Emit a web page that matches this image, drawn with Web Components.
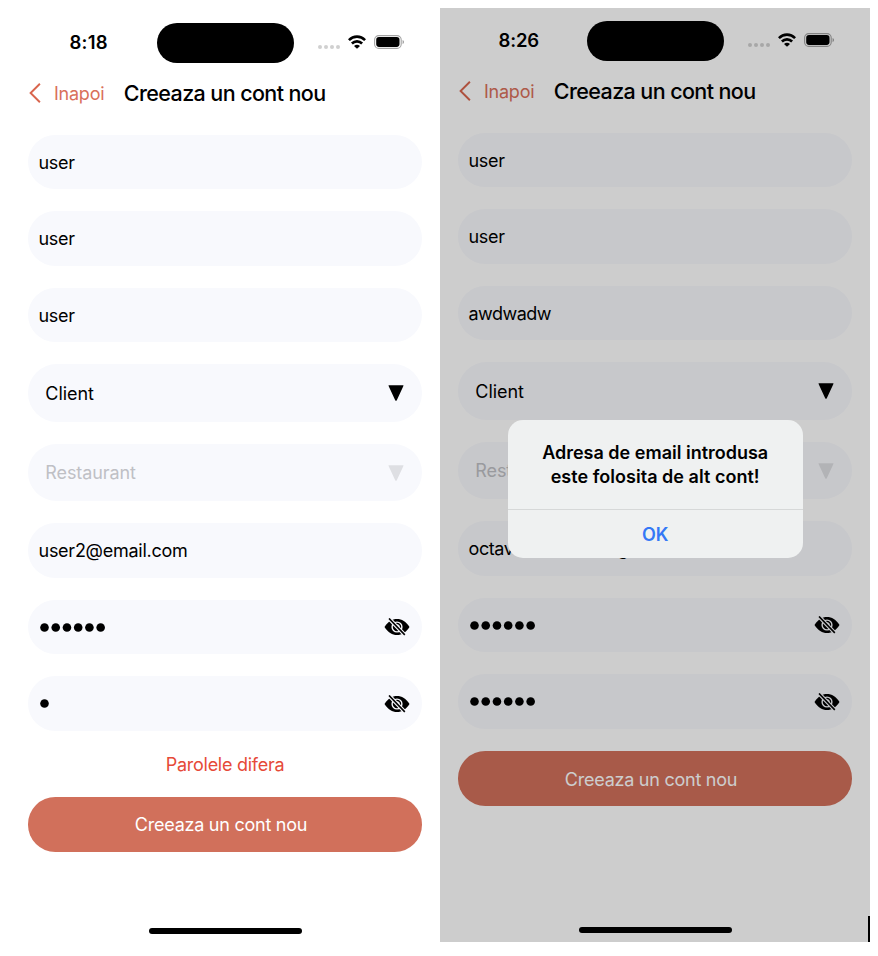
<!DOCTYPE html>
<html lang="ro"><head><meta charset="utf-8"><title>Creeaza un cont nou</title>
<style>
html,body{margin:0;background:#fff}
body{width:878px;height:956px;overflow:hidden;font-family:Inter,"Liberation Sans",sans-serif;font-size:18px;color:#000}
</style></head><body>
<sign-up-board></sign-up-board>
<script>
const define=(name,html,init)=>customElements.define(name,class extends HTMLElement{
  connectedCallback(){
    if(this.shadowRoot)return;
    this.attachShadow({mode:'open'}).innerHTML=typeof html==='function'?html(this):html;
    if(init)init(this);
  }
});

// Single line of text whose tracking is adjusted to a given width
define('fit-text',`<style>:host{display:inline-block;white-space:nowrap;line-height:24px}span{display:inline-block}</style><span><slot></slot></span>`,el=>{
  const w=+el.getAttribute('w'),s=el.shadowRoot.querySelector('span'),n=el.textContent.trim().length;
  if(!w)return;
  const d=(w-s.getBoundingClientRect().width)/n;
  s.style.letterSpacing=d.toFixed(3)+'px';
});

define('status-bar',el=>`<style>
:host{display:grid;grid-template-columns:146.5px 137px 1fr;height:40px;margin-top:12.5px;align-items:center}
.time{font-weight:600;font-size:18.5px;text-align:center;padding-left:11px;padding-bottom:1px}
.island{background:#000;height:40px;border-radius:20px}
.icons{display:flex;align-items:center;padding:0 0 1px 24.5px}
.dots{display:flex;gap:1.9px;margin-top:9px}.dots i{width:4px;height:4px;border-radius:50%;background:#d0d0d0}
.wifi{margin-left:8px}.bat{margin-left:8px}svg{display:block}
</style><div class="time"><fit-text w="${el.getAttribute('tw')}">${el.getAttribute('time')}</fit-text></div><div class="island"></div>
<div class="icons"><div class="dots"><i></i><i></i><i></i><i></i></div>
<svg class="wifi" width="18" height="14" viewBox="0 0 18 14"><g fill="none" stroke="#000" stroke-width="2.6"><path d="M.9 5.1C5.4.4 12.6.4 17.1 5.1"/><path d="M3.9 8.5C6.8 5.6 11.2 5.6 14.1 8.5"/></g><path d="M6 10.9Q9 8.6 12 10.9L9 13.8Z"/></svg>
<svg class="bat" width="31" height="14" viewBox="0 0 31 14"><rect x=".6" y=".6" width="26.6" height="12.8" rx="4.2" fill="none" stroke="#a3a3a3" stroke-width="1.1"/><rect x="2.2" y="2.1" width="23.3" height="9.8" rx="2.8"/><path d="M28.6 5v4.2q1.4-.5 1.4-2.1T28.6 5Z" fill="#999"/></svg></div>`);

define('nav-header',`<style>
:host{display:flex;align-items:center;height:61.2px;padding:0 0 11px 18.5px}
svg{display:block;margin-right:13.5px}
.back{color:#d9705b;margin-right:19.5px;padding-top:2px}.title{font-size:21.5px;font-weight:500}
</style><svg width="12" height="20" viewBox="0 0 12 20"><path d="M10.9.8 1.6 10l9.3 9.2" fill="none" stroke="#d9654d" stroke-width="1.9"/></svg>
<fit-text class="back" w="50.3">Inapoi</fit-text><fit-text class="title" w="201.8">Creeaza un cont nou</fit-text>`);

define('text-field',`<style>
:host{display:flex;box-sizing:border-box;align-items:center;height:54.6px;border-radius:27.3px;background:#f8f9fd;padding:0 12px 0 10.5px}
.v{flex:1;display:flex;align-items:center;padding-top:1.5px}
</style><div class="v"><slot></slot></div><slot name="end"></slot>`);

define('password-field',el=>{
  const n=+el.getAttribute('count');
  let dots='';
  for(let i=0;i<n;i++)dots+=`<circle cx="${5.5+i*11.23}" cy="4.5" r="4.3"/>`;
  return `<style>:host{display:block}svg{display:block}</style><text-field><svg width="72" height="10" viewBox="0 0 72 10">${dots}</svg>
<svg slot="end" width="26" height="18" viewBox="0 0 26 18"><path d="M.5 9C4 3.4 8.2 1 13 1s9 2.4 12.5 8C22 14.6 17.8 17 13 17S4 14.6.5 9Z"/><circle cx="13" cy="9" r="4.9" fill="#000" stroke="#f8f9fd" stroke-width="1.4"/><path d="M13 6.9a2.1 2.1 0 0 1 2.1 2.1" fill="none" stroke="#f8f9fd" stroke-width="1.3"/><path d="M4.4-.1 21.4 17.5" stroke="#f8f9fd" stroke-width="3.9"/><path d="M5 .5 20.8 16.9" stroke="#000" stroke-width="1.6"/></svg></text-field>`;
});

define('select-field',`<style>
:host{display:flex;box-sizing:border-box;align-items:center;justify-content:space-between;height:57.4px;border-radius:28.7px;background:#f8f9fd;padding:0 18.3px 0 17.3px}
:host([disabled]){color:#bfc0c5}
::slotted(*){padding-top:1px}
svg{display:block;fill:#000}:host([disabled]) svg{fill:#dedfe3}
</style><slot></slot><svg width="16" height="16" viewBox="0 0 16 16"><path d="M1 .2h14q.8 0 .4.8L8.8 15.2q-.8 1.2-1.6 0L.6 1Q.2.2 1 .2Z"/></svg>`);

define('error-message',`<style>:host{display:flex;box-sizing:border-box;align-items:center;justify-content:center;height:66px;padding-top:1px;color:#e64a38}</style><slot></slot>`);
define('primary-button',`<style>:host{display:flex;box-sizing:border-box;align-items:center;justify-content:center;height:54.6px;border-radius:27.3px;background:#d1705b;color:#fff;padding:2px 8px 0 0}</style><slot></slot>`);

define('phone-screen',el=>`<style>
:host{display:flex;flex-direction:column;position:relative;width:430px;overflow:hidden;background:#fff}
.form{display:flex;flex-direction:column;padding:0 18px}
.fields{display:flex;flex-direction:column;gap:22px}
.home{width:153px;height:6px;border-radius:3px;background:#000;margin:auto auto 9px}
.shade{position:absolute;inset:0;background:rgba(0,0,0,.198)}
</style><status-bar time="${el.getAttribute('time')}" tw="${el.getAttribute('tw')}"></status-bar><nav-header></nav-header>
<div class="form"><div class="fields"><slot></slot></div><slot name="footer"></slot></div><div class="home"></div>
${el.hasAttribute('dim')?'<div class="shade"></div>':''}<slot name="over"></slot>`);

define('alert-dialog',`<style>
:host{position:absolute;left:67.7px;top:411.6px;width:295px;height:138.4px;border-radius:15px;background:#eff1f1;display:flex;flex-direction:column}
.msg{flex:1;display:flex;flex-direction:column;align-items:center;justify-content:center;font-weight:600}
.ok{height:47.5px;border-top:1px solid #d6d8d8;display:flex;align-items:center;justify-content:center;color:#3478f6;font-weight:600}
.ok fit-text{padding-top:2px}
</style><div class="msg"><fit-text w="226">Adresa de email introdusa</fit-text><fit-text w="209">este folosita de alt cont!</fit-text></div><div class="ok"><fit-text w="26.5">OK</fit-text></div>`);

define('sign-up-board',`<style>
:host{display:flex;padding-left:10px;align-items:flex-start}
.a{margin-top:10px;height:933px}.b{margin-top:8px;height:934px}
.hidden-gap{display:inline-block;width:104px}
.edge{position:absolute;right:0;bottom:0;width:2px;height:26px;background:#000}
primary-button.gap{margin-top:22.3px}
</style>
<phone-screen class="a" time="8:18" tw="38.5">
<text-field><fit-text w="36.3">user</fit-text></text-field><text-field><fit-text w="36.3">user</fit-text></text-field><text-field><fit-text w="36.3">user</fit-text></text-field>
<select-field><fit-text w="48.5">Client</fit-text></select-field><select-field disabled><fit-text w="90.5">Restaurant</fit-text></select-field>
<text-field><fit-text w="149">user2@email.com</fit-text></text-field>
<password-field count="6"></password-field><password-field count="1"></password-field>
<error-message slot="footer"><fit-text w="118.5">Parolele difera</fit-text></error-message>
<primary-button slot="footer"><fit-text w="172.3">Creeaza un cont nou</fit-text></primary-button>
</phone-screen>
<phone-screen class="b" dim time="8:26" tw="40.5">
<text-field><fit-text w="36.3">user</fit-text></text-field><text-field><fit-text w="36.3">user</fit-text></text-field><text-field><fit-text w="82.5">awdwadw</fit-text></text-field>
<select-field><fit-text w="48.5">Client</fit-text></select-field><select-field disabled><fit-text w="90.5">Restaurant</fit-text></select-field>
<text-field><fit-text w="45">octav</fit-text><span class="hidden-gap"></span><fit-text>g</fit-text></text-field>
<password-field count="6"></password-field><password-field count="6"></password-field>
<primary-button class="gap" slot="footer"><fit-text w="172.3">Creeaza un cont nou</fit-text></primary-button>
<div class="edge" slot="over"></div>
<alert-dialog slot="over"></alert-dialog>
</phone-screen>`);
</script></body></html>
